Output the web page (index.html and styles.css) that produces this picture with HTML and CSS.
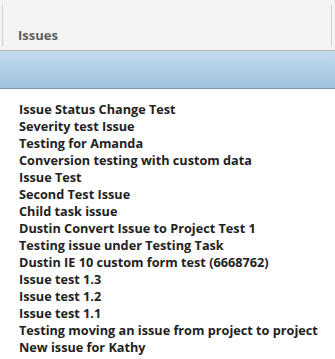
FILE: index.html
```
<!DOCTYPE html>
<html>
<head>
<meta charset="utf-8">
<link rel="stylesheet" href="styles.css">
</head>
<body>
<div class="head">
  <div class="head-inner"><span class="title">Issues</span></div>
</div>
<div class="band"></div>
<ul class="list">
  <li>Issue Status Change Test</li>
  <li>Severity test Issue</li>
  <li>Testing for Amanda</li>
  <li>Conversion testing with custom data</li>
  <li>Issue Test</li>
  <li>Second Test Issue</li>
  <li>Child task issue</li>
  <li>Dustin Convert Issue to Project Test 1</li>
  <li>Testing issue under Testing Task</li>
  <li>Dustin IE 10 custom form test (6668762)</li>
  <li>Issue test 1.3</li>
  <li>Issue test 1.2</li>
  <li>Issue test 1.1</li>
  <li>Testing moving an issue from project to project</li>
  <li>New issue for Kathy</li>
</ul>
</body>
</html>
```
FILE: styles.css
```
html, body { margin: 0; padding: 0; background: #fff; }
body { font-family: "Open Sans", "Liberation Sans", sans-serif; }
.head {
  background: #f4f4f4;
  height: 51px;
  border-bottom: 1px solid #b5b5b5;
  padding: 5px 3px 0 2px;
  box-sizing: border-box;
}
.head-inner {
  height: 41px;
  border-left: 1px solid #d0d0d0;
  border-right: 1px solid #d0d0d0;
  display: flex;
  align-items: flex-end;
  padding-left: 15px;
  padding-bottom: 2px;
  box-sizing: border-box;
}
.title { font-size: 13px; font-weight: 700; color: #5e5e5e; }
.band {
  height: 37px;
  background: linear-gradient(#c2dcec, #9ec3de);
  border-bottom: 1px solid #7893ab;
}
.list {
  list-style: none;
  margin: 0;
  padding: 12px 0 0 19px;
}
.list li {
  font-size: 12.7px;
  font-weight: 700;
  color: #222;
  line-height: 17px;
  white-space: nowrap;
}
```
